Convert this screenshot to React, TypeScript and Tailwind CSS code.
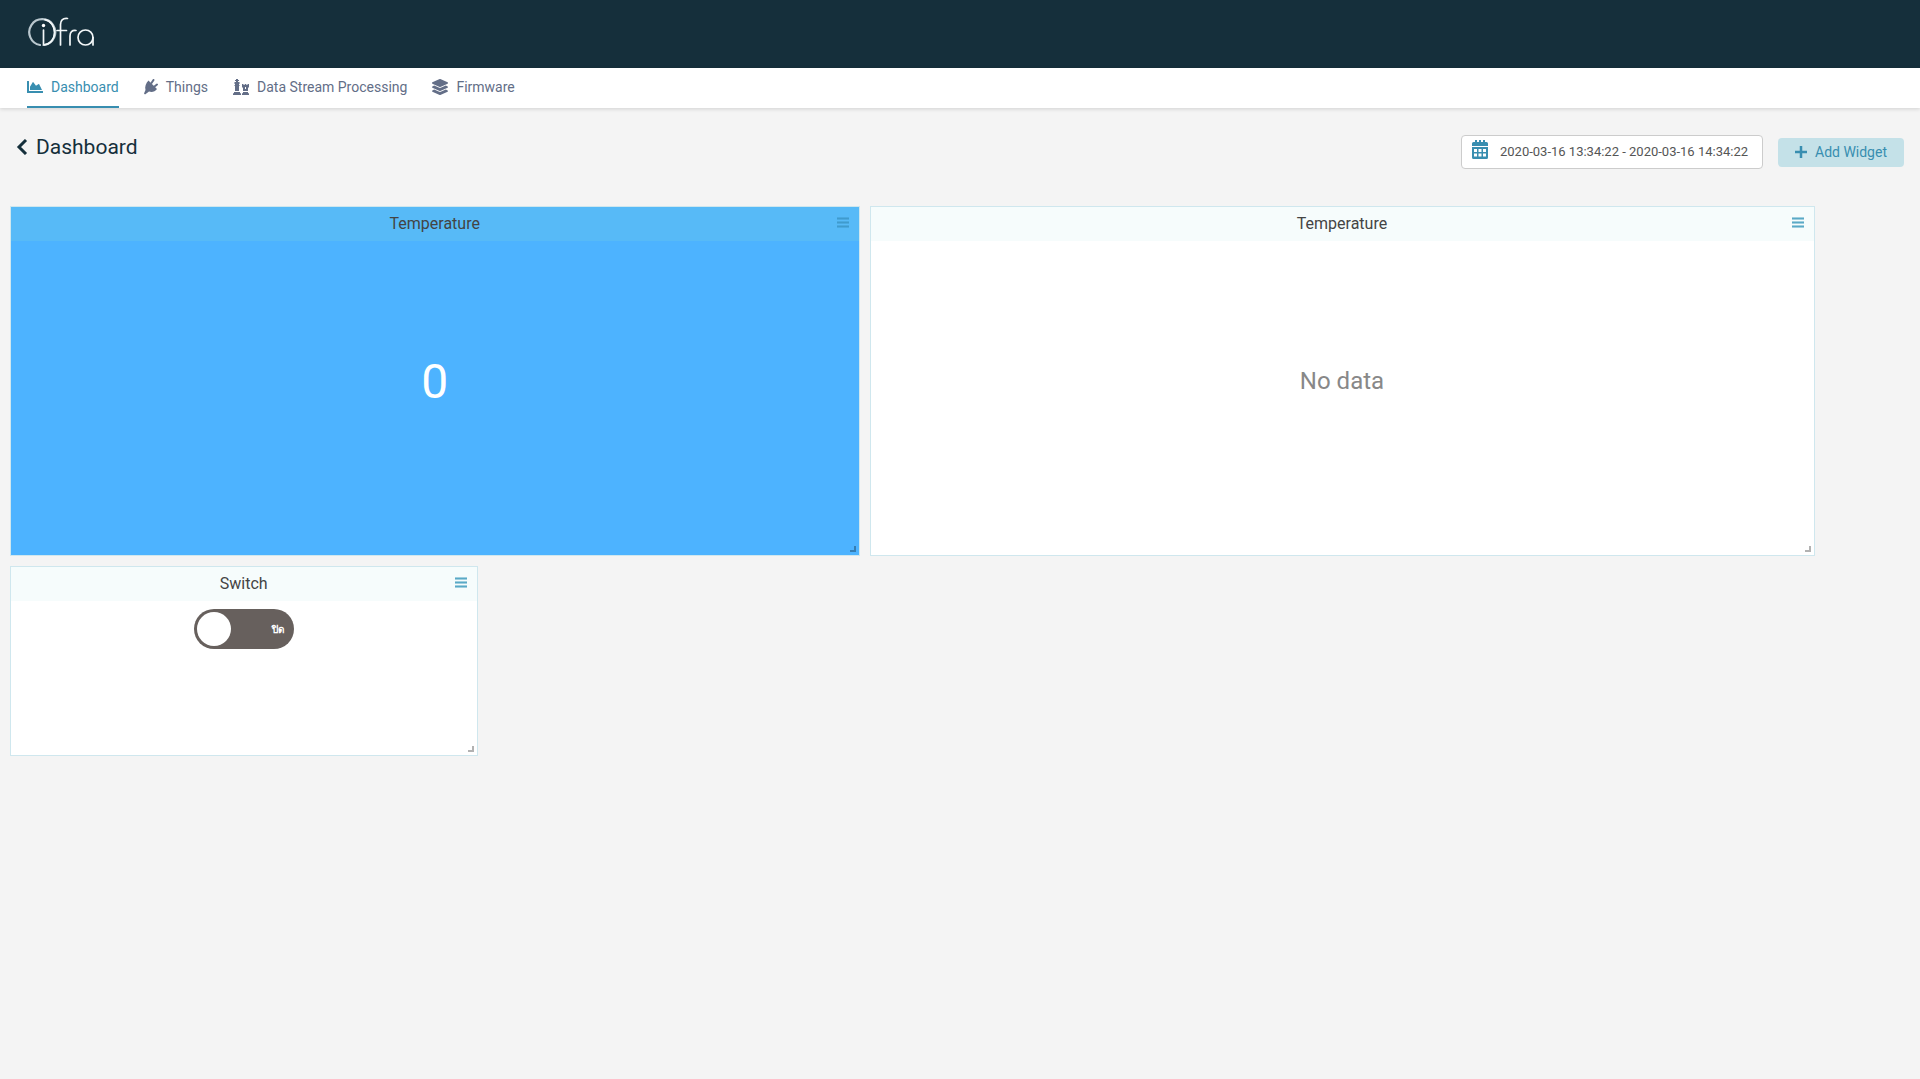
import React, { useState } from "react";
import { FaChartArea, FaLayerGroup } from "react-icons/fa";

const PlugIcon = () => (
  <svg width="14" height="16" viewBox="0 0 14 16" fill="currentColor" aria-hidden="true">
    <path d="M4.500 1.500 13 10C11 13 7.500 13.500 5 12.500L1 15.500 0 14.500 1.500 11C.5 7.500 2 4 4.500 1.500Z" />
    <path d="m7.500 4 2-3M10.500 7.500 13 5.500" stroke="currentColor" strokeWidth="2" strokeLinecap="round" />
  </svg>
);

const ChessIcon = () => (
  <svg width="16" height="16" viewBox="0 0 16 16" fill="currentColor" aria-hidden="true">
    <path d="M3 0h2v1h1v1H5v1h1.500v2H6v1h.5v1H6v5H2V7h-.5V6H2V5h-.5V3H3V2H2V1h1ZM1 13h6v1l1 .5V16H0v-1.500l1-.5Z" />
    <path fillRule="evenodd" d="M9 5h1.500v1h1.200V5h1.600v1h1.200V5H16v3l-1 1v3h-5V9L9 8Zm3 3v2h1V8ZM10 13h5v1l1 .5V16H9v-1.500l1-.5Z" />
  </svg>
);

const CalendarIcon = () => (
  <svg width="16" height="19" viewBox="0 0 16 19" fill="currentColor" aria-hidden="true">
    <path fillRule="evenodd" d="M3 0h2v2h2V0h2v2h2V0h2v2h1.500A1.500 1.500 0 0 1 16 3.500V6H0V3.500A1.500 1.500 0 0 1 1.500 2H3ZM0 7h16v10.500a1.500 1.500 0 0 1-1.500 1.500h-13A1.500 1.500 0 0 1 0 17.500Zm2 2v3h3V9Zm4.500 0v3h3V9ZM11 9v3h3V9ZM2 13.500v3h3v-3Zm4.500 0v3h3v-3Zm4.500 0v3h3v-3Z" />
  </svg>
);

const Logo = () => (
  <svg width="68" height="32" viewBox="0 0 68 32" role="img" aria-label="ifra" fill="none" stroke="#f3f7f8" strokeWidth="1.700" strokeLinecap="round">
    <path d="M13 29A13 13 0 1 1 17.500 29" stroke="#b9c7ce" strokeWidth="2.200" />
    <path d="M16.500 14v15C24 28 27.500 22.500 27.500 16.500S24 5 18 3.600" />
    <circle cx="16.500" cy="9.500" r="1.700" fill="#fff" stroke="none" />
    <path d="M33.500 29V8.500c0-4 2-6.500 7-6M30 14.500H39.500M43 29V20c0-4 2-6 6-5.500" />
    <circle cx="58.500" cy="21.500" r="7.500" />
    <path d="M66 21.500V29" />
  </svg>
);

const tabs = [
  { label: "Dashboard", icon: <FaChartArea size={16} />, active: true },
  { label: "Things", icon: <PlugIcon />, active: false },
  { label: "Data Stream Processing", icon: <ChessIcon />, active: false },
  { label: "Firmware", icon: <FaLayerGroup size={16} />, active: false },
];

type WidgetProps = { title: string; className: string; filled?: boolean; children: React.ReactNode };

function Widget({ title, className, filled, children }: WidgetProps) {
  return (
    <section className={`relative flex flex-col border border-[#cfe7ee] ${filled ? "bg-[#4db3ff]" : "bg-white"} ${className}`}>
      <header className={`relative flex h-[34px] shrink-0 items-center justify-center ${filled ? "bg-[#57baf7]" : "bg-[#f6fcfc]"}`}>
        <h2 className="text-base text-[#444]">{title}</h2>
        <button aria-label={`${title} menu`} className={`absolute right-2.5 top-2.5 ${filled ? "text-[#3f9bce]" : "text-[#5aa9c6]"}`}>
          <svg width="12" height="12" viewBox="0 0 12 12" fill="currentColor" aria-hidden="true">
            <path d="M0 0h12v3H0zM0 4h12v3H0zM0 8h12v3H0z" opacity=".55" />
            <path d="M0 1h12v1H0zM0 5h12v1H0zM0 9h12v1H0z" />
          </svg>
        </button>
      </header>
      {children}
      <span className="absolute bottom-[3px] right-[3px] size-1.5 border-b-2 border-r-2 border-black/30" />
    </section>
  );
}

export default function App() {
  const [on, setOn] = useState(false);
  return (
    <div className="min-h-screen bg-[#f4f4f4] font-[Roboto,'Noto_Sans',sans-serif]">
      <header className="flex h-17 items-center bg-[#152f3b] px-[27px] pb-1">
        <a href="#home"><Logo /></a>
      </header>
      <nav className="flex h-10 gap-[25px] bg-white px-[27px] text-sm shadow-[0_1px_4px_rgba(0,0,0,0.15)]">
        {tabs.map((t) => (
          <a key={t.label} href="#tab" className={`flex items-center gap-2 border-b-2 ${t.active ? "border-[#388eb0] text-[#388eb0]" : "border-transparent text-[#636e87]"}`}>
            {t.icon}
            <span>{t.label}</span>
          </a>
        ))}
      </nav>
      <main>
        <div className="flex items-start justify-between px-4 pt-[27px]">
          <div className="flex items-center gap-2 text-[#152f3b]">
            <button aria-label="Back">
              <svg width="12" height="16" viewBox="0 0 12 16" fill="none" stroke="currentColor" strokeWidth="3" aria-hidden="true"><path d="m10 1-7 7 7 7" /></svg>
            </button>
            <h1 className="text-[21px] leading-6">Dashboard</h1>
          </div>
          <div className="flex items-center gap-[15px]">
            <button className="flex h-[34px] w-[302px] items-center gap-2 rounded border border-[#ccc] bg-white px-2.5 text-[13px] text-[#555]">
              <span className="pb-1.5 text-[#388eb0]"><CalendarIcon /></span>
              <span className="grow whitespace-nowrap">2020-03-16 13:34:22 - 2020-03-16 14:34:22</span>
            </button>
            <button className="flex h-[29px] w-[126px] items-center justify-center gap-2 rounded bg-[#c4e1e8] text-sm text-[#388eb0]">
              <svg width="12" height="12" viewBox="0 0 12 12" stroke="currentColor" strokeWidth="2.500" aria-hidden="true"><path d="M6 0v12M0 6h12" /></svg>
              Add Widget
            </button>
          </div>
        </div>
        <div className="mt-[37px] grid auto-rows-[30px] grid-cols-20 gap-2.5 px-2.5">
          <Widget title="Temperature" filled className="col-span-9 row-span-9">
            <div className="flex flex-1 items-center justify-center pb-8 text-5xl text-white">0</div>
          </Widget>
          <Widget title="Temperature" className="col-span-10 row-span-9">
            <div className="flex flex-1 items-center justify-center pb-[34px] text-2xl text-[#888]">No data</div>
          </Widget>
          <Widget title="Switch" className="col-span-5 col-start-1 row-span-5">
            <label className="relative mx-auto mt-2 flex h-10 w-25 cursor-pointer items-center justify-between rounded-full bg-[#67605d] pl-[3px] pr-2.5">
              <input type="checkbox" role="switch" aria-label="Switch" checked={on} onChange={() => setOn(!on)} className="absolute inset-0 size-full cursor-pointer opacity-0" />
              <span className="size-[34px] rounded-full bg-white" />
              <span className="text-[10px] font-bold text-white">ปิด</span>
            </label>
          </Widget>
        </div>
      </main>
    </div>
  );
}
